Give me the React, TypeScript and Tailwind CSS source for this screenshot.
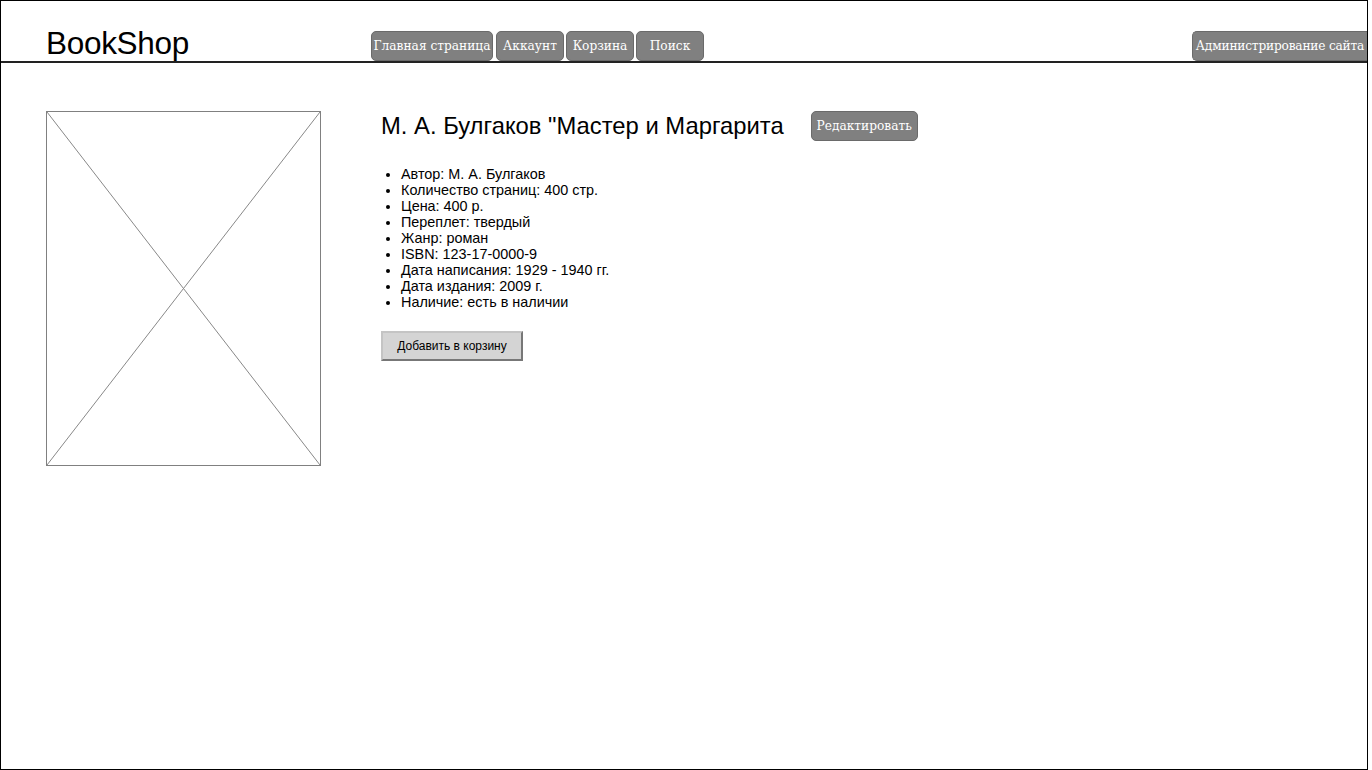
const navItems = [
  { label: 'Главная страница', width: 'w-[122px]' },
  { label: 'Аккаунт', width: 'w-[68px]' },
  { label: 'Корзина', width: 'w-[68px]' },
  { label: 'Поиск', width: 'w-[68px]' },
];

const details = [
  'Автор: М. А. Булгаков',
  'Количество страниц: 400 стр.',
  'Цена: 400 р.',
  'Переплет: твердый',
  'Жанр: роман',
  'ISBN: 123-17-0000-9',
  'Дата написания: 1929 - 1940 гг.',
  'Дата издания: 2009 г.',
  'Наличие: есть в наличии',
];

const grayBtn =
  "h-[30px] rounded-[5px] bg-[#808080] border border-[#6a6a6a] text-white text-[12.2px] font-['DejaVu_Serif',serif] whitespace-nowrap flex items-center justify-center";

export default function App() {
  return (
    <div className="w-[1368px] h-[770px] border border-black bg-white flex flex-col font-['Liberation_Sans',Arial,sans-serif] text-black">
      {/* Header */}
      <header className="h-[62px] shrink-0 border-b-2 border-[#222] flex items-end">
        <div className="w-[370px] pl-[45px] text-[31.5px] leading-[36px] tracking-[-0.3px]">BookShop</div>
        <nav className="flex gap-[2px]">
          {navItems.map((item, i) => (
            <button key={item.label} className={`${grayBtn} ${item.width} ${i === 1 ? 'ml-[1px]' : ''}`}>
              {item.label}
            </button>
          ))}
        </nav>
        <div className="flex-1" />
        <button className={`${grayBtn} w-[175px] rounded-r-none border-r-0 tracking-[-0.2px]`}>
          Администрирование сайта
        </button>
      </header>

      {/* Book */}
      <main className="flex pl-[45px] pt-[48px]">
        <div className="w-[275px] h-[355px] border border-[#808080] shrink-0">
          <svg width="100%" height="100%" viewBox="0 0 273 353" preserveAspectRatio="none">
            <line x1="0" y1="0" x2="273" y2="353" stroke="#888" strokeWidth="1" />
            <line x1="273" y1="0" x2="0" y2="353" stroke="#888" strokeWidth="1" />
          </svg>
        </div>

        <div className="ml-[60px]">
          <div className="flex items-center h-[30px] gap-[27px]">
            <h1 className="text-[23.8px] leading-[30px]">М. А. Булгаков "Мастер и Маргарита</h1>
            <button className={`${grayBtn} w-[107px]`}>Редактировать</button>
          </div>

          <ul className="list-disc pl-[20px] mt-[25px] text-[14.4px] leading-[16px]">
            {details.map((d) => (
              <li key={d}>{d}</li>
            ))}
          </ul>

          <button className="mt-[21px] w-[142px] h-[30px] bg-[#d4d4d4] border-2 border-t-[#c4c4c4] border-l-[#c4c4c4] border-b-[#777] border-r-[#777] text-[12px] text-black">
            Добавить в корзину
          </button>
        </div>
      </main>
    </div>
  );
}
